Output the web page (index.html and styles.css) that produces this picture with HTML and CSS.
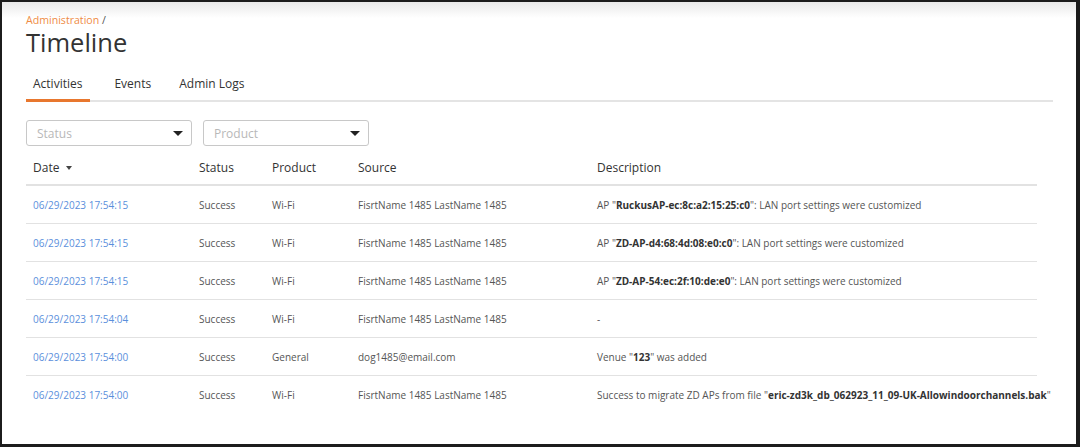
FILE: index.html
```html
<!DOCTYPE html>
<html>
<head>
<meta charset="utf-8">
<link rel="stylesheet" href="styles.css">
</head>
<body>
<div class="frame">
  <div class="page">
    <div class="crumb">Administration <span class="slash">/</span></div>
    <h1 class="title">Timeline</h1>
    <div class="tabs">
      <div class="tab active">Activities</div>
      <div class="tab">Events</div>
      <div class="tab">Admin Logs</div>
    </div>
    <div class="filters">
      <div class="select s1"><span>Status</span><span class="caret"></span></div>
      <div class="select s2"><span>Product</span><span class="caret"></span></div>
    </div>
    <div class="table">
      <div class="row head">
        <div class="c date">Date <span class="sort"></span></div>
        <div class="c">Status</div>
        <div class="c">Product</div>
        <div class="c">Source</div>
        <div class="c">Description</div>
      </div>
      <div class="row">
        <div class="c link">06/29/2023 17:54:15</div>
        <div class="c">Success</div>
        <div class="c">Wi-Fi</div>
        <div class="c">FisrtName 1485 LastName 1485</div>
        <div class="c">AP "<b>RuckusAP-ec:8c:a2:15:25:c0</b>": LAN port settings were customized</div>
      </div>
      <div class="row">
        <div class="c link">06/29/2023 17:54:15</div>
        <div class="c">Success</div>
        <div class="c">Wi-Fi</div>
        <div class="c">FisrtName 1485 LastName 1485</div>
        <div class="c">AP "<b>ZD-AP-d4:68:4d:08:e0:c0</b>": LAN port settings were customized</div>
      </div>
      <div class="row">
        <div class="c link">06/29/2023 17:54:15</div>
        <div class="c">Success</div>
        <div class="c">Wi-Fi</div>
        <div class="c">FisrtName 1485 LastName 1485</div>
        <div class="c">AP "<b>ZD-AP-54:ec:2f:10:de:e0</b>": LAN port settings were customized</div>
      </div>
      <div class="row">
        <div class="c link">06/29/2023 17:54:04</div>
        <div class="c">Success</div>
        <div class="c">Wi-Fi</div>
        <div class="c">FisrtName 1485 LastName 1485</div>
        <div class="c">-</div>
      </div>
      <div class="row">
        <div class="c link">06/29/2023 17:54:00</div>
        <div class="c">Success</div>
        <div class="c">General</div>
        <div class="c">dog1485@email.com</div>
        <div class="c">Venue "<b>123</b>" was added</div>
      </div>
      <div class="row last">
        <div class="c link">06/29/2023 17:54:00</div>
        <div class="c">Success</div>
        <div class="c">Wi-Fi</div>
        <div class="c">FisrtName 1485 LastName 1485</div>
        <div class="c">Success to migrate ZD APs from file "<b>eric-zd3k_db_062923_11_09-UK-Allowindoorchannels.bak</b>"</div>
      </div>
    </div>
  </div>
</div>
</body>
</html>
```
FILE: styles.css
```css
html, body {
  margin: 0;
  padding: 0;
  background: #1c1c1c;
}
.frame {
  box-sizing: border-box;
  width: 1080px;
  height: 447px;
  border-top: 2px solid #1c1c1c;
  border-left: 2px solid #1c1c1c;
  border-right: 4px solid #1c1c1c;
  border-bottom: 3px solid #1c1c1c;
  background: linear-gradient(#e9e9e9 0px, #ffffff 16px, #ffffff 100%);
  font-family: "Open Sans", "Noto Sans", sans-serif;
  overflow: hidden;
}
.page {
  padding: 11px 0 0 24px;
}
.crumb {
  font-size: 10.6px;
  line-height: 14px;
  color: #ef8c45;
}
.crumb .slash {
  color: #555;
}
.title {
  margin: 0;
  font-size: 25.5px;
  line-height: 30px;
  font-weight: 400;
  color: #333;
}
.tabs {
  display: flex;
  margin-top: 14px;
  width: 1027px;
  border-bottom: 2px solid #e4e4e4;
}
.tab {
  font-size: 12px;
  line-height: 18px;
  color: #333;
  padding: 4px 7px 6px 7px;
  margin-right: 14px;
  margin-bottom: -2px;
  border-bottom: 3px solid transparent;
}
.tab.active {
  border-bottom-color: #e8772e;
  padding-right: 8px;
  margin-right: 17px;
}
.filters {
  display: flex;
  gap: 11px;
  margin-top: 18px;
}
.select {
  box-sizing: border-box;
  width: 166px;
  height: 26px;
  border: 1px solid #c8c8c8;
  border-radius: 3px;
  display: flex;
  align-items: center;
  justify-content: space-between;
  padding: 0 8px 0 10px;
  font-size: 12px;
  color: #b8b8b8;
}
.caret {
  width: 0;
  height: 0;
  border-left: 5px solid transparent;
  border-right: 5px solid transparent;
  border-top: 5px solid #222;
  margin-top: 1px;
}
.table {
  width: 1011px;
  margin-top: 0;
}
.row {
  box-sizing: border-box;
  display: grid;
  grid-template-columns: 166px 73px 86px 239px 1fr;
  height: 38px;
  align-items: center;
  border-bottom: 1px solid #e2e2e2;
  font-size: 10px;
  color: #555;
  white-space: nowrap;
}
.row.head {
  height: 40px;
  padding-top: 4px;
  font-size: 12px;
  color: #333;
  border-bottom: 2px solid #e2e2e2;
}
.row.last {
  border-bottom: none;
}
.c {
  padding-left: 7px;
}
.c b {
  font-weight: 700;
  color: #333;
}
.link {
  color: #5b8fdc;
}
.sort {
  display: inline-block;
  width: 0;
  height: 0;
  border-left: 3px solid transparent;
  border-right: 3px solid transparent;
  border-top: 4px solid #444;
  margin-left: 3px;
  vertical-align: 2px;
}
```
